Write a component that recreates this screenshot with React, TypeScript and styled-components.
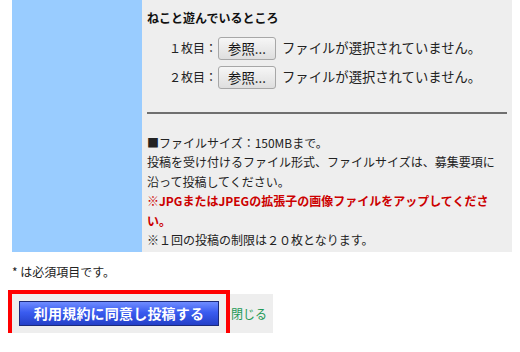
import React from 'react'
import styled, { createGlobalStyle } from 'styled-components'

const GlobalStyle = createGlobalStyle`
    body {
        margin: 0;
        background: #ffffff;
        font-family: Meiryo, 'Noto Sans CJK JP', 'Noto Sans', sans-serif;
        color: #222;
    }
`

const Page = styled.div`
    width: 500px;
    padding-left: 12px;
`

const FormRow = styled.div`
    display: grid;
    grid-template-columns: 130px 1fr;
    height: 252px;
`

const LabelCell = styled.div`
    background: #99ccff;
`

const FieldCell = styled.div`
    background: #eeeeee;
    padding: 8px 5px 0 5px;
    font-size: 12px;
    line-height: 19.5px;
`

const FieldTitle = styled.div`
    font-weight: bold;
    color: #111;
`

const FileRow = styled.div<{ $first?: boolean }>`
    display: flex;
    align-items: center;
    height: 23px;
    padding-left: 22px;
    margin-top: ${(p) => (p.$first ? '9px' : '6px')};
`

const FileLabel = styled.span`
    width: 49px;
    font-size: 12px;
    white-space: nowrap;
`

const BrowseButton = styled.button`
    width: 58px;
    height: 23px;
    padding: 0;
    border: 1px solid #a7a7a7;
    border-radius: 3px;
    background: linear-gradient(#f6f6f6, #dedede);
    font-family: inherit;
    font-size: 13.33px;
    color: #111;
    line-height: 19px;
`

const FileStatus = styled.span`
    margin-left: 6px;
    font-size: 13.33px;
    white-space: nowrap;
`

const Divider = styled.hr`
    margin: 23px 0 0 0;
    border: none;
    border-top: 2px solid #6f6f6f;
    height: 0;
`

const Notes = styled.div`
    margin-top: 19px;
`

const NoteLine = styled.div<{ $alert?: boolean }>`
    white-space: nowrap;
    color: ${(p) => (p.$alert ? '#cc0000' : '#222')};
    font-weight: ${(p) => (p.$alert ? 'bold' : 'normal')};
`

const Required = styled.p`
    margin: 10px 0 0 0;
    font-size: 12px;
    line-height: 19.5px;
`

const ActionBar = styled.div`
    display: inline-flex;
    align-items: center;
    margin-top: 12px;
    background: #eeeeee;
    padding-right: 6px;
`

const SubmitWrap = styled.div`
    padding: 7px;
    outline: 4px solid #ff0000;
`

const SubmitButton = styled.button`
    display: block;
    width: 200px;
    height: 25px;
    padding: 0;
    border: 1px solid #1b2a7a;
    background: linear-gradient(#6f8cff 0%, #3a5cf0 45%, #2440c8 100%);
    color: #ffffff;
    font-family: inherit;
    font-size: 14px;
    font-weight: bold;
    letter-spacing: 0.2px;
`

const CloseLink = styled.a`
    margin-left: 5px;
    font-size: 12px;
    color: #229955;
    text-decoration: none;
`

const files = ['１枚目：', '２枚目：']

export default function App() {
    return (
        <>
            <GlobalStyle />
            <Page>
                <FormRow>
                    <LabelCell />
                    <FieldCell>
                        <FieldTitle>ねこと遊んでいるところ</FieldTitle>
                        {files.map((label, i) => (
                            <FileRow key={label} $first={i === 0}>
                                <FileLabel>{label}</FileLabel>
                                <BrowseButton>参照...</BrowseButton>
                                <FileStatus>ファイルが選択されていません。</FileStatus>
                            </FileRow>
                        ))}
                        <Divider />
                        <Notes>
                            <NoteLine>■ファイルサイズ：150MBまで。</NoteLine>
                            <NoteLine>投稿を受け付けるファイル形式、ファイルサイズは、募集要項に</NoteLine>
                            <NoteLine>沿って投稿してください。</NoteLine>
                            <NoteLine $alert>※JPGまたはJPEGの拡張子の画像ファイルをアップしてくださ</NoteLine>
                            <NoteLine $alert>い。</NoteLine>
                            <NoteLine>※１回の投稿の制限は２０枚となります。</NoteLine>
                        </Notes>
                    </FieldCell>
                </FormRow>
                <Required>* は必須項目です。</Required>
                <ActionBar>
                    <SubmitWrap>
                        <SubmitButton>利用規約に同意し投稿する</SubmitButton>
                    </SubmitWrap>
                    <CloseLink href="#">閉じる</CloseLink>
                </ActionBar>
            </Page>
        </>
    )
}
